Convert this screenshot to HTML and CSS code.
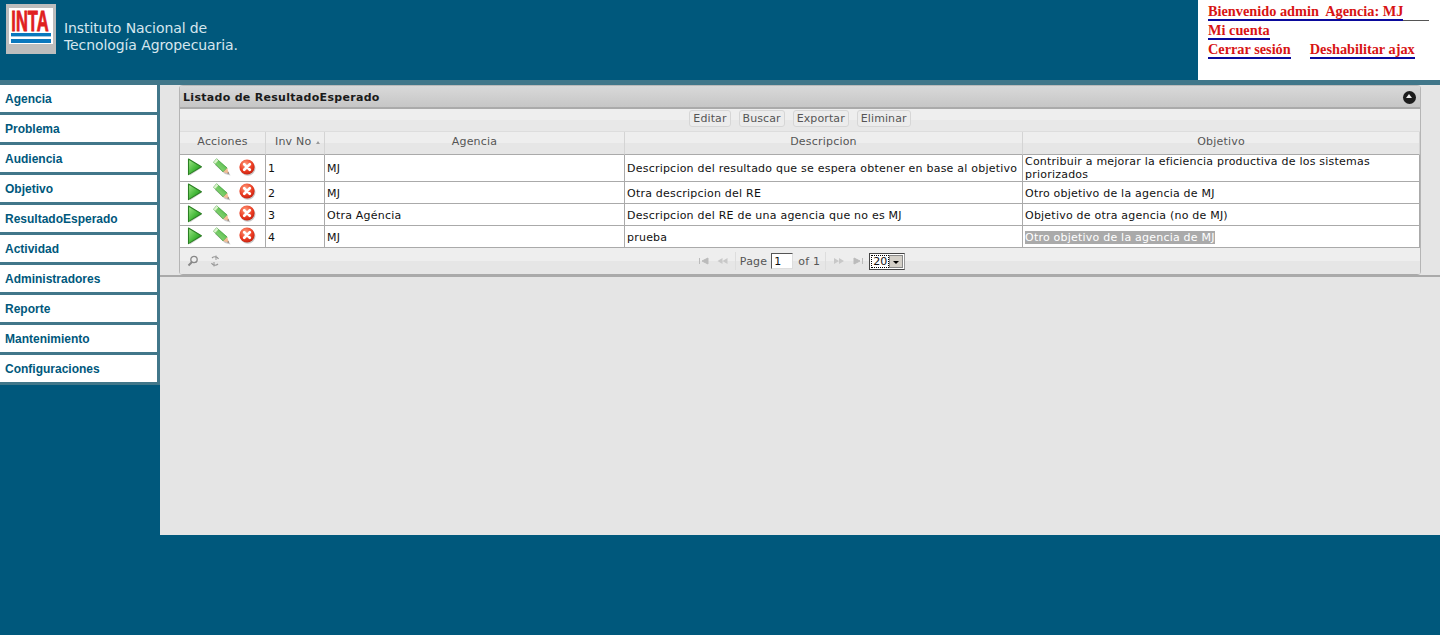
FILE: index.html
```html
<!DOCTYPE html>
<html lang="es">
<head>
<meta charset="utf-8">
<title>Listado de ResultadoEsperado</title>
<link rel="stylesheet" href="styles.css">
</head>
<body>
<svg class="defs" width="0" height="0" aria-hidden="true">
  <defs>
    <linearGradient id="gp" x1="0" y1="0" x2="1" y2="1"><stop offset="0" stop-color="#a4e88c"/><stop offset=".55" stop-color="#45b93a"/><stop offset="1" stop-color="#1d861d"/></linearGradient>
    <linearGradient id="ge" x1="0" y1="1" x2="1" y2="0"><stop offset="0" stop-color="#a6e68e"/><stop offset="1" stop-color="#3fae38"/></linearGradient>
    <radialGradient id="gx" cx=".4" cy=".3" r=".8"><stop offset="0" stop-color="#ff9a7a"/><stop offset=".6" stop-color="#ea3a20"/><stop offset="1" stop-color="#b81a0c"/></radialGradient>
    <symbol id="i-play" viewBox="0 0 16 18"><path d="M2 1.8 L15 9.5 L3 17.4 Z" fill="#999" opacity=".45"/><path d="M1.5 1 L14.4 8.8 L1.5 16.6 Z" fill="url(#gp)" stroke="#2a7f22" stroke-width="1.1" stroke-linejoin="round"/></symbol>
    <symbol id="i-edit" viewBox="0 0 18 18"><path d="M4 4 L15 13 L17.5 17.5 L12 16 L2 7 Z" fill="#999" opacity=".55"/><path d="M3.6 .8 L14.2 10 L10.2 14 L.6 4.2 Z" fill="url(#ge)" stroke="#3a9a34" stroke-width=".7"/><path d="M3.6 .8 L.6 4.2 L2.2 5.8 L5.4 2.4 Z" fill="#dcf2cc"/><path d="M14.2 10 L15.8 15.8 L10.2 14 Z" fill="#f2bc94"/><path d="M15.8 15.8 L14.4 15.3 L15.2 14 Z" fill="#444"/></symbol>
    <symbol id="i-del" viewBox="0 0 17 17"><circle cx="8.8" cy="9.2" r="7.6" fill="#999" opacity=".55"/><circle cx="8" cy="8" r="7.6" fill="url(#gx)"/><path d="M5.2 5.2 L10.8 10.8 M10.8 5.2 L5.2 10.8" stroke="#fff" stroke-width="2.7" stroke-linecap="round"/></symbol>
  </defs>
</svg>
<header class="top">
  <div class="brand">
    <svg class="logo" width="50" height="50" viewBox="0 0 50 50" role="img" aria-label="INTA">
      <rect width="50" height="50" fill="#bdbdbd"/>
      <rect x="3" y="4" width="44" height="36" fill="#fff"/>
      <text class="logo-text" transform="translate(5.3 26.5) scale(.55 1)">INTA</text>
      <rect x="5" y="29" width="40" height="3.4" fill="#0a78bd"/>
      <rect x="5" y="35" width="40" height="4" fill="#0a78bd"/>
    </svg>
    <div class="brand-name">Instituto Nacional de<br>Tecnología Agropecuaria.</div>
  </div>
  <div class="userbox">
    <div class="userline"><a class="ulink">Bienvenido admin&nbsp; Agencia: MJ</a><span class="ufill"></span></div>
    <div class="userline"><a class="ulink">Mi cuenta</a></div>
    <div class="userline userline-gap"><a class="ulink">Cerrar sesión</a><a class="ulink">Deshabilitar ajax</a></div>
  </div>
</header>
<div class="stripe"></div>
<div class="body">
  <nav class="side">
    <ul class="menu">
      <li class="menu-item">Agencia</li>
      <li class="menu-item">Problema</li>
      <li class="menu-item">Audiencia</li>
      <li class="menu-item">Objetivo</li>
      <li class="menu-item">ResultadoEsperado</li>
      <li class="menu-item">Actividad</li>
      <li class="menu-item">Administradores</li>
      <li class="menu-item">Reporte</li>
      <li class="menu-item">Mantenimiento</li>
      <li class="menu-item">Configuraciones</li>
    </ul>
  </nav>
  <main class="main">
    <div class="main-top">
      <section class="panel">
        <div class="panel-title">
          <span>Listado de ResultadoEsperado</span>
          <span class="collapse"></span>
        </div>
        <div class="toolbar">
          <button class="tbtn">Editar</button>
          <button class="tbtn">Buscar</button>
          <button class="tbtn">Exportar</button>
          <button class="tbtn">Eliminar</button>
        </div>
        <table class="grid">
          <colgroup><col class="c1"><col class="c2"><col class="c3"><col class="c4"><col class="c5"></colgroup>
          <thead>
            <tr><th>Acciones</th><th class="th-sort">Inv No<span class="sort"></span></th><th>Agencia</th><th>Descripcion</th><th>Objetivo</th></tr>
          </thead>
          <tbody>
            <tr class="tall">
              <td class="act"><svg class="ic ic-play"><use href="#i-play"/></svg><svg class="ic ic-edit"><use href="#i-edit"/></svg><svg class="ic ic-del"><use href="#i-del"/></svg></td>
              <td>1</td><td>MJ</td><td>Descripcion del resultado que se espera obtener en base al objetivo</td><td>Contribuir a mejorar la eficiencia productiva de los sistemas priorizados</td>
            </tr>
            <tr>
              <td class="act"><svg class="ic ic-play"><use href="#i-play"/></svg><svg class="ic ic-edit"><use href="#i-edit"/></svg><svg class="ic ic-del"><use href="#i-del"/></svg></td>
              <td>2</td><td>MJ</td><td>Otra descripcion del RE</td><td>Otro objetivo de la agencia de MJ</td>
            </tr>
            <tr>
              <td class="act"><svg class="ic ic-play"><use href="#i-play"/></svg><svg class="ic ic-edit"><use href="#i-edit"/></svg><svg class="ic ic-del"><use href="#i-del"/></svg></td>
              <td>3</td><td>Otra Agéncia</td><td>Descripcion del RE de una agencia que no es MJ</td><td>Objetivo de otra agencia (no de MJ)</td>
            </tr>
            <tr>
              <td class="act"><svg class="ic ic-play"><use href="#i-play"/></svg><svg class="ic ic-edit"><use href="#i-edit"/></svg><svg class="ic ic-del"><use href="#i-del"/></svg></td>
              <td>4</td><td>MJ</td><td>prueba</td><td><span class="sel">Otro objetivo de la agencia de MJ</span></td>
            </tr>
          </tbody>
        </table>
        <div class="pager">
          <div class="pager-left">
            <svg width="12" height="12" viewBox="0 0 12 12"><circle cx="7" cy="4.5" r="3.2" fill="none" stroke="#888" stroke-width="1.3"/><path d="M5 7 L1.5 10.5" stroke="#888" stroke-width="2"/></svg>
            <svg width="12" height="12" viewBox="0 0 12 12"><path d="M9.5 4 A4 4 0 0 0 3 3 M2.5 8 A4 4 0 0 0 9 9" fill="none" stroke="#999" stroke-width="1.2"/><path d="M7 .5 V5 M5 7 V11.5" stroke="#999" stroke-width="1"/></svg>
          </div>
          <div class="pager-center">
            <svg class="pg pg-first" width="11" height="8" viewBox="0 0 11 8"><path d="M1.5 1V7M10 1V7L4 4Z" fill="#bbb" stroke="#bbb"/></svg>
            <svg class="pg pg-prev" width="11" height="8" viewBox="0 0 11 8"><path d="M5.5 1V7L.5 4ZM10.5 1V7L5.5 4Z" fill="#c8c8c8"/></svg>
            <span class="sep sep-a"></span>
            <span class="pg-label">Page</span>
            <input class="pg-input" value="1" aria-label="Page">
            <span class="pg-label pg-of">of 1</span>
            <span class="sep sep-b"></span>
            <svg class="pg pg-next" width="12" height="8" viewBox="0 0 12 8"><path d="M1 1V7L6 4ZM6 1V7L11 4Z" fill="#c8c8c8"/></svg>
            <svg class="pg pg-last" width="11" height="8" viewBox="0 0 11 8"><path d="M9.5 1V7M1 1V7L7 4Z" fill="#bbb" stroke="#bbb"/></svg>
            <div class="pg-select"><span class="pg-val">20</span><span class="pg-arrow"></span></div>
          </div>
        </div>
      </section>
    </div>
  </main>
</div>
<footer class="foot"></footer>
</body>
</html>
```
FILE: styles.css
```css
* { box-sizing: border-box; }
html, body { margin: 0; height: 635px; overflow: hidden; }
body { background: #00587c; font-family: "DejaVu Sans", sans-serif; font-size: 11px; color: #222; }
.defs { position: absolute; }

.top { height: 80px; display: flex; justify-content: space-between; background: #00587c; }
.brand { display: flex; padding: 4px 0 0 6px; }
.logo { display: block; }
.logo-text { font: bold 30px "Liberation Sans", sans-serif; fill: #e02020; stroke: #e02020; stroke-width: .9px; }
.brand-name { margin: 16px 0 0 8px; color: #d5e6ee; font-size: 14px; line-height: 17px; letter-spacing: -.09px; }

.userbox { width: 242px; background: #fff; padding: 3px 0 0 10px; font: bold 14.3px/19px "Liberation Serif", serif; color: #d81414; }
.userline { display: flex; align-items: flex-start; height: 19px; }
.ulink { border-bottom: 2px solid #0a0a9c; line-height: 17px; height: 18px; white-space: nowrap; }
.ufill { width: 26px; height: 18px; border-bottom: 1px solid #555; }
.userline-gap { gap: 19px; }

.stripe { height: 5px; background: #41778a; }
.body { display: flex; height: 450px; }
.side { width: 160px; flex: none; }
.menu { list-style: none; margin: 0; padding: 0; border-right: 3px solid #41778a; }
.menu-item { height: 30px; padding: 6px 0 0 5px; background: #fff; border-bottom: 3px solid #41778a; font: bold 12px/16px "Liberation Sans", sans-serif; color: #00587c; }

.main { flex: 1; background: #e5e5e5; }
.main-top { padding-left: 19px; height: 192px; border-bottom: 2px solid #aaa; }
.panel { width: 1242px; height: 190px; border: 1px solid #b5b5b5; border-top: 0; border-bottom: 0; border-radius: 4px; overflow: hidden; background: #eee; }

.panel-title { height: 24px; padding: 1px 4px 0 3px; display: flex; align-items: center; justify-content: space-between; background: linear-gradient(#d9d9d9, #c6c6c6); border-bottom: 2px solid #aaa; border-top: 1px solid #bbb; font-weight: bold; letter-spacing: .3px; color: #1a1a1a; }
.collapse { width: 13px; height: 13px; border-radius: 50%; background: #1c1c1c; position: relative; }
.collapse::after { content: ""; position: absolute; left: 3px; top: 3px; border: 3.5px solid transparent; border-top: 0; border-bottom: 4px solid #eee; }

.toolbar { height: 23px; display: flex; justify-content: center; gap: 8px; padding-top: 1px; background: linear-gradient(#eee 50%, #e8e8e8 50%); border-bottom: 1px solid #ddd; }
.tbtn { height: 17px; padding: 0 3px; font: 11px "DejaVu Sans", sans-serif; color: #555; letter-spacing: .1px; background: #ececec; border: 1px solid #d6d6d6; border-radius: 3px; }

.grid { width: 1240px; table-layout: fixed; border-collapse: separate; border-spacing: 0; }
.c1 { width: 86px; } .c2 { width: 59px; } .c3 { width: 300px; } .c4 { width: 398px; } .c5 { width: 397px; }
.grid th { height: 23px; padding: 0 0 3px; font-weight: normal; color: #555; letter-spacing: .2px; border-right: 1px solid #d4d4d4; border-bottom: 1px solid #aaa; background: linear-gradient(#eee 50%, #e6e6e6 50%); }
.th-sort { position: relative; text-align: left; padding-left: 9px !important; }
.sort { position: absolute; right: 4px; top: 7px; border: 2px solid transparent; border-bottom: 3px solid #999; }
.grid td { height: 22px; padding: 2px 2px 0; background: #fff; color: #111; line-height: 13px; letter-spacing: .22px; border-right: 1px solid #aaa; border-bottom: 1px solid #aaa; overflow: hidden; }
.grid .tall td { height: 27px; padding-top: 0; }
.grid .act { white-space: nowrap; font-size: 0; padding: 0 0 2px 7px; }
.ic { display: inline-block; vertical-align: middle; }
.ic-play { width: 16px; height: 18px; }
.ic-edit { width: 18px; height: 18px; margin-left: 10px; }
.ic-del { width: 17px; height: 17px; margin-left: 8px; }
.sel { background: #aaa; color: #fff; }

.pager { height: 27px; position: relative; display: flex; align-items: center; justify-content: center; background: linear-gradient(#eee 50%, #e6e6e6 50%); border-bottom: 1px solid #aaa; }
.pager-left { position: absolute; left: 7px; top: 7px; display: flex; gap: 10px; }
.pager-center { display: flex; align-items: center; gap: 4px; margin-left: 3px; color: #555; }
.pg { display: block; }
.pg-first { margin-right: 4px; }
.pg-prev { margin-right: 3px; }
.sep { width: 1px; height: 18px; background: #ddd; }
.pg-of { margin-left: 1px; }
.sep-b { margin-left: 1px; margin-right: 3px; }
.pg-next { margin-right: 4px; }
.pg-last { margin-right: 1px; }
.pg-label { letter-spacing: .2px; }
.pg-input { width: 22px; height: 16px; padding: 0 2px; font: 11px "DejaVu Sans", sans-serif; color: #111; background: #fff; border: 1px solid; border-color: #555 #ddd #ddd #555; outline: 0; }
.pg-select { width: 36px; height: 17px; display: flex; background: #fff; border: 1px solid #444; border-right-color: #999; padding: 1px; }
.pg-val { flex: 1; font-size: 11px; line-height: 12px; text-align: center; border: 1px dotted #000; color: #111; }
.pg-arrow { width: 14px; background: #d4d0c8; border: 1px solid #888; position: relative; }
.pg-arrow::after { content: ""; position: absolute; left: 3px; top: 5px; border: 3px solid transparent; border-top: 3px solid #000; border-bottom: 0; }

.foot { height: 100px; background: #00587c; }
```
